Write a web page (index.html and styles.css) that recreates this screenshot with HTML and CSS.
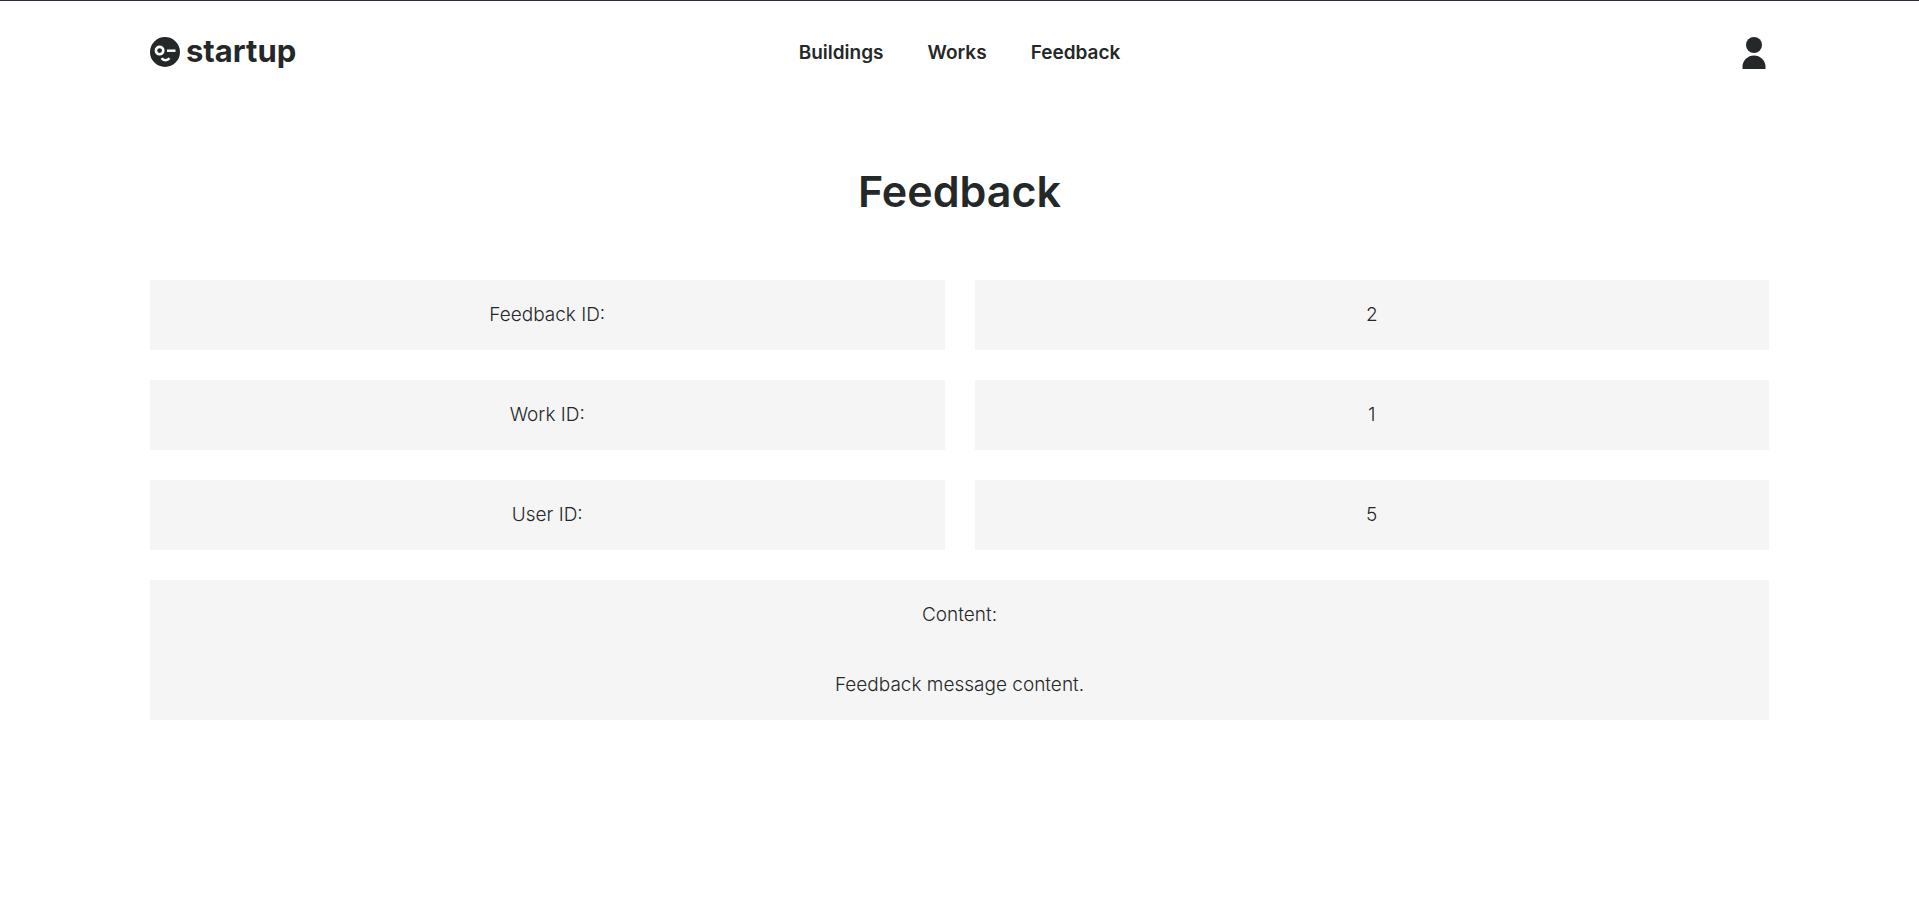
FILE: index.html
```html
<!DOCTYPE html>
<html lang="en">
<head>
<meta charset="utf-8">
<title>Feedback</title>
<meta name="viewport" content="width=device-width, initial-scale=1">
<link rel="stylesheet" href="styles.css">
</head>
<body>
<header class="header">
  <a class="logo" href="#">
    <svg class="logo-face" viewBox="0 0 30 30" aria-hidden="true">
      <circle cx="15" cy="15" r="15" fill="#252829"/>
      <circle cx="9.6" cy="13.600" r="3.700" fill="none" stroke="#fff" stroke-width="2.600"/>
      <path d="M17 13.700h8.500" stroke="#fff" stroke-width="2.400"/>
      <path d="M11.500 21.300c2 2.600 6 2.600 8 0" fill="none" stroke="#fff" stroke-width="2.400"/>
    </svg>
    <span class="logo-text">startup</span>
  </a>
  <nav class="nav">
    <a href="#">Buildings</a>
    <a href="#">Works</a>
    <a href="#">Feedback</a>
  </nav>
  <a class="account" href="#" aria-label="Account">
    <svg class="account-icon" viewBox="0 0 24 32" aria-hidden="true">
      <circle cx="12" cy="8" r="8" fill="#252829"/>
      <path d="M0.500 32v-2a11.500 11.500 0 0 1 23 0v2z" fill="#252829"/>
    </svg>
  </a>
</header>
<main class="main">
  <h1 class="title">Feedback</h1>
  <dl class="details">
    <dt class="cell">Feedback ID:</dt>
    <dd class="cell">2</dd>
    <dt class="cell">Work ID:</dt>
    <dd class="cell">1</dd>
    <dt class="cell">User ID:</dt>
    <dd class="cell">5</dd>
    <div class="content">
      <dt class="cell">Content:</dt>
      <dd class="cell">Feedback message content.</dd>
    </div>
  </dl>
</main>
</body>
</html>
```
FILE: styles.css
```css
* {
  box-sizing: border-box;
}

body {
  margin: 0;
  border-top: 1px solid #2b2b3b;
  background: #fff;
  color: #252829;
  font-family: Inter, "Liberation Sans", sans-serif;
  font-size: 19px;
  font-weight: 300;
  line-height: 30px;
}

a {
  color: inherit;
  text-decoration: none;
}

.header {
  display: grid;
  grid-template-columns: 1fr auto 1fr;
  align-items: center;
  height: 104px;
  padding: 0 150px;
}

.logo {
  display: flex;
  align-items: center;
  gap: 6px;
  padding-bottom: 2px;
}

.logo-face {
  width: 30px;
  height: 30px;
}

.logo-text {
  padding-bottom: 2px;
  font-size: 31px;
  font-weight: 700;
}

.nav {
  display: flex;
  gap: 44px;
  font-weight: 600;
}

.account {
  justify-self: end;
  display: flex;
  padding-right: 3px;
}

.account-icon {
  width: 24px;
  height: 32px;
}

.main {
  padding: 56px 150px 150px;
}

.title {
  margin: 0 0 59px;
  font-size: 43px;
  font-weight: 600;
  line-height: 60px;
  text-align: center;
}

.details {
  display: grid;
  grid-template-columns: 1fr 1fr;
  gap: 30px;
  margin: 0;
}

.cell {
  margin: 0;
  padding: 20px;
  background: #f5f5f5;
  text-align: center;
}

.content {
  grid-column: 1 / -1;
}
```
